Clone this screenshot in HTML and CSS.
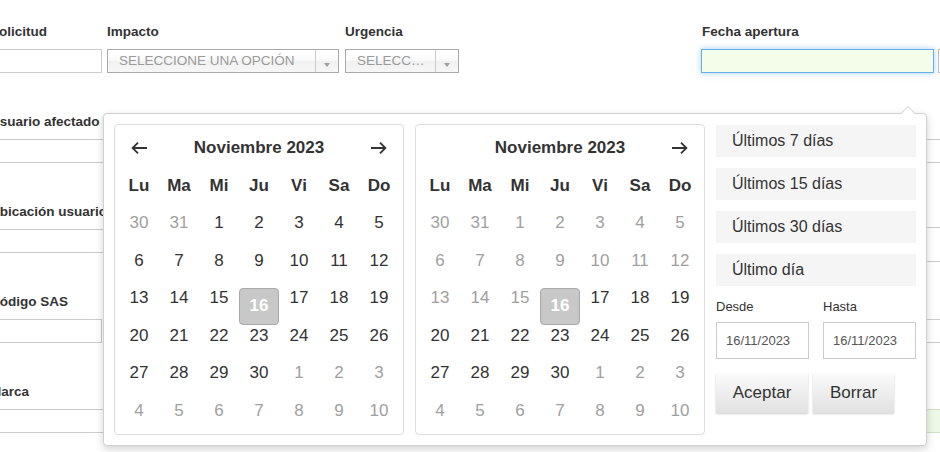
FILE: index.html
```html
<!DOCTYPE html>
<html lang="es">
<head>
<meta charset="utf-8">
<title>Formulario de solicitud</title>
<link rel="stylesheet" href="styles.css">
</head>
<body>
<div class="page">
  <div class="row row-top">
    <div class="field f-sol"><div class="lbl">Solicitud</div><div class="inp"></div></div>
    <div class="field f-imp"><div class="lbl">Impacto</div><div class="sel"><span class="sel-text">SELECCIONE UNA OPCIÓN</span><span class="sel-arrow"><i></i></span></div></div>
    <div class="field f-urg"><div class="lbl">Urgencia</div><div class="sel"><span class="sel-text">SELECCIONE UNA OPCIÓN</span><span class="sel-arrow"><i></i></span></div></div>
    <div class="field f-fecha"><div class="lbl">Fecha apertura</div><div class="inp inp-focus"></div></div>
    <div class="field f-next"><div class="lbl">&nbsp;</div><div class="inp"></div></div>
  </div>
  <div class="row">
    <div class="field f-left"><div class="lbl">Usuario afectado</div><div class="inp"></div></div>
    <div class="field f-right"><div class="lbl">&nbsp;</div><div class="inp"></div></div>
  </div>
  <div class="row">
    <div class="field f-left"><div class="lbl">Ubicación usuario</div><div class="inp"></div></div>
    <div class="field f-right"><div class="lbl">&nbsp;</div><div class="inp tall"></div></div>
  </div>
  <div class="row">
    <div class="field f-left"><div class="lbl">Código SAS</div><div class="inp narrow"></div></div>
    <div class="field f-right"><div class="lbl">&nbsp;</div><div class="inp"></div></div>
  </div>
  <div class="row">
    <div class="field f-left"><div class="lbl">Marca</div><div class="inp"></div></div>
    <div class="field f-right"><div class="lbl">&nbsp;</div><div class="inp inp-green"></div></div>
  </div>
</div>

<div class="picker">
  <div class="cal">
    <div class="cal-head">
      <span class="nav"><svg width="16" height="12" viewBox="0 0 16 12"><path d="M16 6H1.6M7 0.7L1.6 6 7 11.3" fill="none" stroke="#333" stroke-width="1.8"/></svg></span>
      <span class="title">Noviembre 2023</span>
      <span class="nav"><svg width="16" height="12" viewBox="0 0 16 12"><path d="M0 6H14.4M9 0.7L14.4 6 9 11.3" fill="none" stroke="#333" stroke-width="1.8"/></svg></span>
    </div>
    <div class="cal-grid">
      <span class="dn">Lu</span><span class="dn">Ma</span><span class="dn">Mi</span><span class="dn">Ju</span><span class="dn">Vi</span><span class="dn">Sa</span><span class="dn">Do</span>
      <span class="d off">30</span><span class="d off">31</span><span class="d">1</span><span class="d">2</span><span class="d">3</span><span class="d">4</span><span class="d">5</span>
      <span class="d">6</span><span class="d">7</span><span class="d">8</span><span class="d">9</span><span class="d">10</span><span class="d">11</span><span class="d">12</span>
      <span class="d">13</span><span class="d">14</span><span class="d">15</span><span class="d sel">16</span><span class="d">17</span><span class="d">18</span><span class="d">19</span>
      <span class="d">20</span><span class="d">21</span><span class="d">22</span><span class="d">23</span><span class="d">24</span><span class="d">25</span><span class="d">26</span>
      <span class="d">27</span><span class="d">28</span><span class="d">29</span><span class="d">30</span><span class="d off">1</span><span class="d off">2</span><span class="d off">3</span>
      <span class="d off">4</span><span class="d off">5</span><span class="d off">6</span><span class="d off">7</span><span class="d off">8</span><span class="d off">9</span><span class="d off">10</span>
    </div>
  </div>
  <div class="cal">
    <div class="cal-head">
      <span class="nav"></span>
      <span class="title">Noviembre 2023</span>
      <span class="nav"><svg width="16" height="12" viewBox="0 0 16 12"><path d="M0 6H14.4M9 0.7L14.4 6 9 11.3" fill="none" stroke="#333" stroke-width="1.8"/></svg></span>
    </div>
    <div class="cal-grid">
      <span class="dn">Lu</span><span class="dn">Ma</span><span class="dn">Mi</span><span class="dn">Ju</span><span class="dn">Vi</span><span class="dn">Sa</span><span class="dn">Do</span>
      <span class="d off">30</span><span class="d off">31</span><span class="d off">1</span><span class="d off">2</span><span class="d off">3</span><span class="d off">4</span><span class="d off">5</span>
      <span class="d off">6</span><span class="d off">7</span><span class="d off">8</span><span class="d off">9</span><span class="d off">10</span><span class="d off">11</span><span class="d off">12</span>
      <span class="d off">13</span><span class="d off">14</span><span class="d off">15</span><span class="d sel">16</span><span class="d">17</span><span class="d">18</span><span class="d">19</span>
      <span class="d">20</span><span class="d">21</span><span class="d">22</span><span class="d">23</span><span class="d">24</span><span class="d">25</span><span class="d">26</span>
      <span class="d">27</span><span class="d">28</span><span class="d">29</span><span class="d">30</span><span class="d off">1</span><span class="d off">2</span><span class="d off">3</span>
      <span class="d off">4</span><span class="d off">5</span><span class="d off">6</span><span class="d off">7</span><span class="d off">8</span><span class="d off">9</span><span class="d off">10</span>
    </div>
  </div>
  <div class="ranges">
    <div class="range">Últimos 7 días</div>
    <div class="range">Últimos 15 días</div>
    <div class="range">Últimos 30 días</div>
    <div class="range">Último día</div>
    <div class="dates">
      <div class="dfield"><div class="dlbl">Desde</div><div class="dinp">16/11/2023</div></div>
      <div class="dfield"><div class="dlbl">Hasta</div><div class="dinp">16/11/2023</div></div>
    </div>
    <div class="btns">
      <button class="btn btn-ok">Aceptar</button>
      <button class="btn btn-clear">Borrar</button>
    </div>
  </div>
</div>
</body>
</html>
```

FILE: styles.css
```css
html, body {
  margin: 0;
  padding: 0;
  background: #fff;
  overflow: hidden;
}
body {
  position: relative;
  width: 940px;
  height: 452px;
  font-family: "Liberation Sans", Arial, sans-serif;
  color: #333;
}

/* background form */
.page {
  width: 1000px;
  margin-left: -10px;
  padding-top: 23px;
}
.row {
  display: flex;
  height: 90px;
}
.field {
  flex: none;
}
.lbl {
  font-size: 13.5px;
  font-weight: bold;
  line-height: 18px;
  height: 18px;
  white-space: nowrap;
  color: #333;
}
.inp {
  margin-top: 8px;
  height: 24px;
  box-sizing: border-box;
  border: 1px solid #ccc;
  background: #fff;
}
.inp.narrow { width: 112px; }
.inp.tall { margin-top: 6px; height: 35px; }
.inp-focus {
  background: #f4fde9;
  border-color: #66afe9;
  box-shadow: 0 0 6px rgba(102, 175, 233, 0.6);
}
.inp-green {
  background: #eef8e6;
  border-color: #d4dccd;
}

.f-sol { width: 112px; }
.f-imp { width: 232px; margin-left: 5px; }
.f-urg { width: 114px; margin-left: 6px; }
.f-fecha { width: 233px; margin-left: 242px; }
.f-next { width: 100px; margin-left: 4px; }
.f-next .inp { border-color: #bbb; }
.f-fecha .lbl { padding-left: 1px; }

.f-left { width: 470px; }
.f-right { width: 520px; margin-left: 10px; }

/* select */
.sel {
  margin-top: 8px;
  height: 24px;
  box-sizing: border-box;
  border: 1px solid #aaa;
  display: flex;
  background: linear-gradient(#fff 20%, #f8f8f8 50%, #f1f1f1 52%, #f6f6f6 100%);
}
.sel-text {
  flex: 1;
  min-width: 0;
  padding-left: 11px;
  padding-right: 9px;
  font-size: 13.5px;
  line-height: 22px;
  color: #9a9a9a;
  white-space: nowrap;
  overflow: hidden;
  text-overflow: ellipsis;
}
.sel-arrow {
  flex: none;
  width: 22px;
  border-left: 1px solid #ccc;
  display: flex;
  justify-content: center;
}
.sel-arrow i {
  display: block;
  margin-top: 13px;
  width: 0;
  height: 0;
  border-left: 3px solid transparent;
  border-right: 3px solid transparent;
  border-top: 4px solid #a0a0a0;
}

/* date range picker */
.picker {
  position: absolute;
  left: 103px;
  top: 113px;
  width: 824px;
  height: 333px;
  box-sizing: border-box;
  background: #fff;
  border: 1px solid #d0d0d0;
  border-radius: 4px;
  padding: 10px;
  display: flex;
  gap: 11px;
  box-shadow: 0 3px 8px rgba(0, 0, 0, 0.18);
}
.picker::before {
  content: "";
  position: absolute;
  top: -8px;
  right: 10px;
  border-left: 8px solid transparent;
  border-right: 8px solid transparent;
  border-bottom: 8px solid #ccc;
}
.picker::after {
  content: "";
  position: absolute;
  top: -7px;
  right: 11px;
  border-left: 7px solid transparent;
  border-right: 7px solid transparent;
  border-bottom: 7px solid #fff;
}
.cal {
  flex: none;
  width: 290px;
  box-sizing: border-box;
  border: 1px solid #ddd;
  border-radius: 4px;
  padding: 4px 4px 0;
}
.cal-head {
  display: grid;
  grid-template-columns: repeat(7, 40px);
  height: 38px;
  align-items: center;
}
.nav {
  display: flex;
  justify-content: center;
  align-items: center;
}
.title {
  grid-column: 2 / 7;
  text-align: center;
  font-weight: bold;
  font-size: 17px;
  color: #333;
}
.cal-grid {
  display: grid;
  grid-template-columns: repeat(7, 40px);
  grid-auto-rows: 37.5px;
  align-items: stretch;
}
.dn, .d {
  display: flex;
  align-items: center;
  justify-content: center;
  font-size: 17px;
}
.dn {
  font-weight: bold;
  color: #333;
}
.d {
  color: #333;
  border-radius: 4px;
}
.d.off { color: #a0a0a0; }
.d.sel {
  height: 37px;
  background: #c8c8c8;
  color: #fff;
  font-weight: bold;
}

.ranges {
  flex: none;
  width: 200px;
  display: flex;
  flex-direction: column;
}
.range {
  height: 32px;
  line-height: 32px;
  background: #f5f5f5;
  padding-left: 16px;
  font-size: 16px;
  color: #333;
  margin-bottom: 11px;
}
.range:first-child { margin-top: 1px; }
.dates {
  display: grid;
  grid-template-columns: 1fr 1fr;
  column-gap: 14px;
  margin-top: 2px;
}
.dlbl {
  font-size: 13px;
  line-height: 16px;
  color: #333;
}
.dinp {
  margin-top: 7px;
  height: 37px;
  box-sizing: border-box;
  border: 1px solid #ccc;
  padding-left: 9px;
  font-size: 13px;
  line-height: 35px;
  color: #555;
}
.btns {
  display: flex;
  gap: 5px;
  margin-top: 14px;
}
.btn {
  flex: none;
  margin: 0;
  height: 40px;
  border: none;
  border-radius: 0;
  font-family: "Liberation Sans", Arial, sans-serif;
  font-size: 17px;
  color: #333;
  background: linear-gradient(#fbfbfb, #e1e1e1);
  box-shadow: 0 1px 2px rgba(0, 0, 0, 0.2);
}
.btn-ok { width: 92px; padding: 0; }
.btn-clear { width: 81px; padding: 0; }
```
